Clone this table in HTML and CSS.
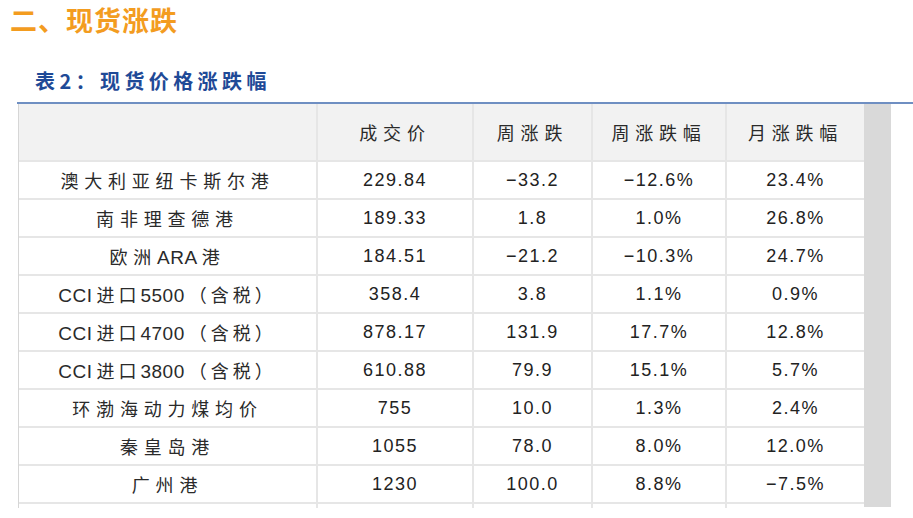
FILE: index.html
```html
<!DOCTYPE html>
<html lang="zh-CN">
<head>
<meta charset="utf-8">
<title>现货涨跌</title>
<link rel="stylesheet" href="styles.css">
</head>
<body>
<div class="page">
  <h1 class="section-title">二、现货涨跌</h1>
  <h2 class="table-title">表2：现货价格涨跌幅</h2>
  <div class="rule"></div>
  <div class="table-area">
    <div class="table-clip">
      <table class="data">
        <colgroup>
          <col class="c1"><col class="c2"><col class="c3"><col class="c4"><col class="c5">
        </colgroup>
        <thead>
          <tr><th></th><th class="cn">成交价</th><th class="cn">周涨跌</th><th class="cn">周涨跌幅</th><th class="cn">月涨跌幅</th></tr>
        </thead>
        <tbody>
          <tr><td class="cn">澳大利亚纽卡斯尔港</td><td>229.84</td><td>−33.2</td><td>−12.6%</td><td>23.4%</td></tr>
          <tr><td class="cn">南非理查德港</td><td>189.33</td><td>1.8</td><td>1.0%</td><td>26.8%</td></tr>
          <tr><td class="cn">欧洲<span class="latin">ARA</span>港</td><td>184.51</td><td>−21.2</td><td>−10.3%</td><td>24.7%</td></tr>
          <tr><td class="cn mix"><span class="latin">CCI</span>进口<span class="latin">5500</span>（含税）</td><td>358.4</td><td>3.8</td><td>1.1%</td><td>0.9%</td></tr>
          <tr><td class="cn mix"><span class="latin">CCI</span>进口<span class="latin">4700</span>（含税）</td><td>878.17</td><td>131.9</td><td>17.7%</td><td>12.8%</td></tr>
          <tr><td class="cn mix"><span class="latin">CCI</span>进口<span class="latin">3800</span>（含税）</td><td>610.88</td><td>79.9</td><td>15.1%</td><td>5.7%</td></tr>
          <tr><td class="cn">环渤海动力煤均价</td><td>755</td><td>10.0</td><td>1.3%</td><td>2.4%</td></tr>
          <tr><td class="cn">秦皇岛港</td><td>1055</td><td>78.0</td><td>8.0%</td><td>12.0%</td></tr>
          <tr><td class="cn">广州港</td><td>1230</td><td>100.0</td><td>8.8%</td><td>−7.5%</td></tr>
          <tr><td></td><td></td><td></td><td></td><td></td></tr>
        </tbody>
      </table>
    </div>
    <div class="scroll-band"></div>
  </div>
</div>
</body>
</html>
```

FILE: styles.css
```css
html, body {
  margin: 0;
  padding: 0;
  background: #ffffff;
}

.page {
  width: 913px;
  height: 518px;
  overflow: hidden;
  font-family: "Liberation Sans", "Noto Sans CJK SC", sans-serif;
  color: #222222;
}

.section-title {
  margin: 0;
  padding: 2px 0 0 10px;
  height: 36px;
  font-family: "Noto Sans CJK SC", sans-serif;
  font-size: 27px;
  line-height: 36px;
  font-weight: 700;
  color: #f39c1f;
  letter-spacing: 1px;
}

.table-title {
  margin: 0;
  padding: 28px 0 0 35px;
  height: 36px;
  font-family: "Noto Sans CJK SC", sans-serif;
  font-size: 20px;
  line-height: 30px;
  font-weight: 700;
  color: #1f4a97;
  letter-spacing: 4.4px;
}

.rule {
  margin-left: 17px;
  height: 2px;
  background: #6f8fc2;
}

.table-area {
  display: flex;
  align-items: flex-start;
  margin-left: 18px;
}

.table-clip {
  height: 404px;
  overflow: hidden;
  border-left: 1px solid #d6d6d6;
}

.data {
  border-collapse: collapse;
  table-layout: fixed;
  width: 845px;
}

.c1 { width: 298px; }
.c2 { width: 156px; }
.c3 { width: 119px; }
.c4 { width: 134px; }
.c5 { width: 138px; }

.data th,
.data td {
  border: 2px solid #e6e6e6;
  text-align: center;
  padding: 0;
  font-weight: 400;
  font-size: 18px;
  color: #222222;
  letter-spacing: 1.5px;
}

.data tr > :first-child { border-left: none; }
.data tr > :last-child { border-right: none; }
.data thead th { border-top: none; }

.data thead th {
  background: #f2f2f2;
  height: 56px;
}

.data tbody td {
  height: 36px;
}

.data .cn {
  font-family: "Noto Sans CJK SC", sans-serif;
  font-size: 18px;
  letter-spacing: 5.8px;
  color: #2a2a2a;
}

.data .latin {
  font-family: "Liberation Sans", sans-serif;
  font-size: 19px;
  letter-spacing: 0.5px;
  margin-right: 4px;
}

.data .mix {
  letter-spacing: 4px;
}

.scroll-band {
  width: 27px;
  height: 403px;
  background: #d9d9d9;
}
```
